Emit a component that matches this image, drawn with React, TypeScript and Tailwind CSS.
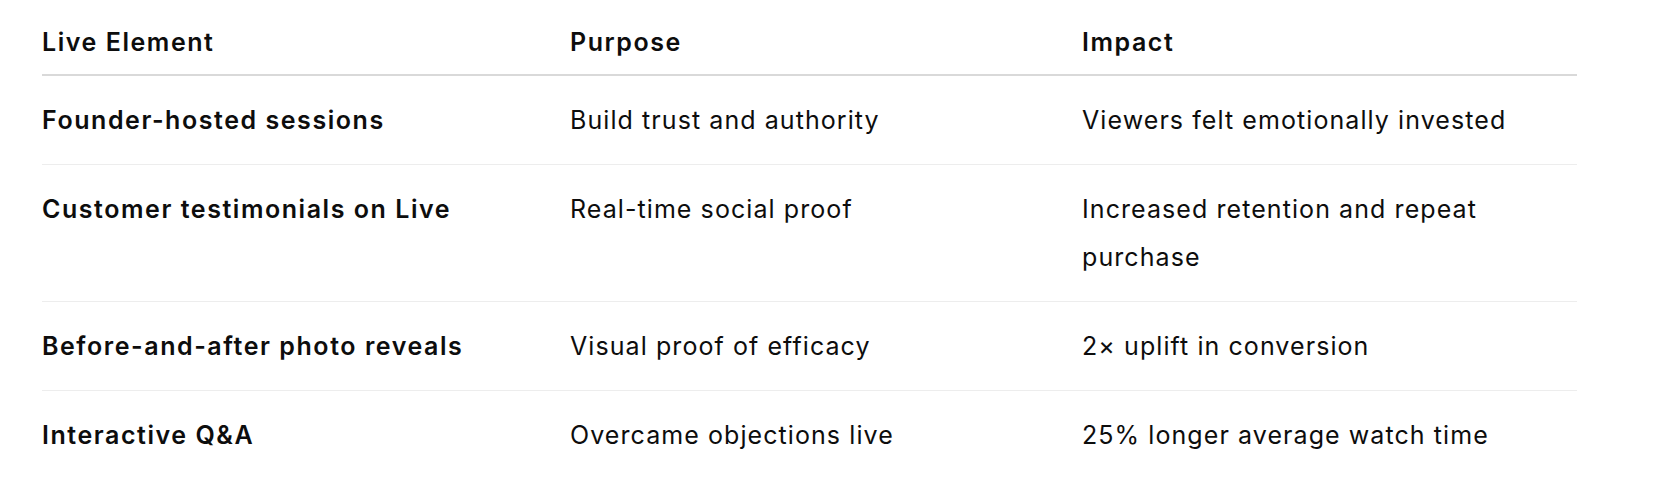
const rows = [
  {
    element: "Founder-hosted sessions",
    purpose: "Build trust and authority",
    impact: "Viewers felt emotionally invested",
  },
  {
    element: "Customer testimonials on Live",
    purpose: "Real-time social proof",
    impact: "Increased retention and repeat purchase",
  },
  {
    element: "Before-and-after photo reveals",
    purpose: "Visual proof of efficacy",
    impact: "2× uplift in conversion",
  },
  {
    element: "Interactive Q&A",
    purpose: "Overcame objections live",
    impact: "25% longer average watch time",
  },
];

export default function App() {
  return (
    <div className="min-h-[492px] w-full bg-white font-['Inter','Liberation_Sans',sans-serif] text-[25px] leading-[48px] tracking-[0.043em] text-[#0d0d0d]">
      <table className="ml-[42px] w-[1535px] table-fixed border-collapse text-left">
        <colgroup>
          <col className="w-[528px]" />
          <col className="w-[512px]" />
          <col className="w-[495px]" />
        </colgroup>
        <thead>
          <tr className="border-b-2 border-[#d9d9d9]">
            <th className="pt-[18px] pb-[8px] pr-4 font-semibold tracking-[0.062em]">Live Element</th>
            <th className="pt-[18px] pb-[8px] pr-4 font-semibold tracking-[0.062em]">Purpose</th>
            <th className="pt-[18px] pb-[8px] pr-4 font-semibold tracking-[0.062em]">Impact</th>
          </tr>
        </thead>
        <tbody>
          {rows.map((row, i) => (
            <tr key={row.element} className={i < rows.length - 1 ? "border-b border-[#ededed]" : ""}>
              <td className="py-5 pr-4 align-top font-semibold tracking-[0.062em]">{row.element}</td>
              <td className="py-5 pr-4 align-top">{row.purpose}</td>
              <td className="py-5 pr-4 align-top">{row.impact}</td>
            </tr>
          ))}
        </tbody>
      </table>
    </div>
  );
}
